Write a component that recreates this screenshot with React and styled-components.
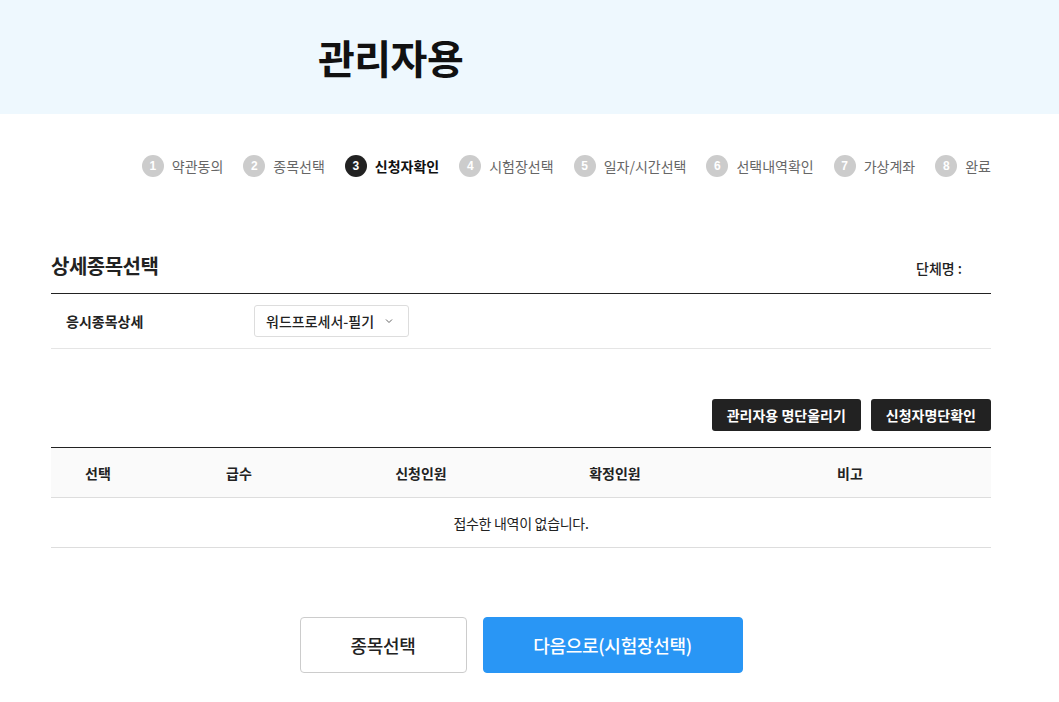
import styled, { createGlobalStyle } from 'styled-components';

const GlobalStyle = createGlobalStyle`
  html, body {
    margin: 0;
    padding: 0;
    background: #fff;
    font-family: 'Noto Sans CJK KR', 'Noto Sans', sans-serif;
    color: #222;
  }
  * { box-sizing: border-box; }
`;

const steps = [
  '약관동의',
  '종목선택',
  '신청자확인',
  '시험장선택',
  '일자/시간선택',
  '선택내역확인',
  '가상계좌',
  '완료',
];

const columns = [
  { label: '선택', width: 94 },
  { label: '급수', width: 188 },
  { label: '신청인원', width: 176 },
  { label: '확정인원', width: 212 },
  { label: '비고', width: 270, shift: 12 },
];

export default function App() {
  return (
    <>
      <GlobalStyle />
      <Header>
        <HeaderInner>
          <PageTitle>관리자용</PageTitle>
        </HeaderInner>
      </Header>

      <Container>
        <StepList>
          {steps.map((label, i) => (
            <Step key={label} active={i === 2}>
              <StepNum active={i === 2}>{i + 1}</StepNum>
              <span>{label}</span>
            </Step>
          ))}
        </StepList>

        <SectionHead>
          <SectionTitle>상세종목선택</SectionTitle>
          <GroupName>단체명 :</GroupName>
        </SectionHead>

        <FormRow>
          <FormLabel>응시종목상세</FormLabel>
          <SelectBox>
            <span>워드프로세서-필기</span>
            <svg width="10" height="10" viewBox="0 0 10 10">
              <path d="M2 3.5 L5 6.5 L8 3.5" fill="none" stroke="#666" strokeWidth="1" />
            </svg>
          </SelectBox>
        </FormRow>

        <ActionBar>
          <DarkButton>관리자용 명단올리기</DarkButton>
          <DarkButton>신청자명단확인</DarkButton>
        </ActionBar>

        <Table>
          <colgroup>
            {columns.map((c) => (
              <col key={c.label} style={{ width: c.width }} />
            ))}
          </colgroup>
          <thead>
            <tr>
              {columns.map((c) => (
                <Th key={c.label} shift={c.shift}>{c.label}</Th>
              ))}
            </tr>
          </thead>
          <tbody>
            <tr>
              <EmptyCell colSpan={5}>접수한 내역이 없습니다.</EmptyCell>
            </tr>
          </tbody>
        </Table>

        <BottomBar>
          <BigButton>종목선택</BigButton>
          <BigButton primary>다음으로(시험장선택)</BigButton>
        </BottomBar>
      </Container>
    </>
  );
}

const Header = styled.header`
  background: #eef8fe;
  height: 114px;
`;

const HeaderInner = styled.div`
  width: 940px;
  margin-left: 51px;
  padding-left: 267px;
  padding-top: 28px;
`;

const PageTitle = styled.h1`
  margin: 0;
  font-size: 40px;
  font-weight: 700;
  line-height: 58px;
  color: #111;
  letter-spacing: -0.5px;
`;

const Container = styled.main`
  width: 940px;
  margin-left: 51px;
`;

const StepList = styled.ol`
  list-style: none;
  margin: 0;
  padding: 40px 0 0;
  display: flex;
  justify-content: flex-end;
  gap: 20px;
`;

const Step = styled.li`
  display: flex;
  align-items: center;
  gap: 8px;
  font-size: 14px;
  line-height: 24px;
  color: ${(p) => (p.active ? '#111' : '#666')};
  font-weight: ${(p) => (p.active ? 700 : 400)};
`;

const StepNum = styled.span`
  width: 22px;
  height: 22px;
  border-radius: 50%;
  background: ${(p) => (p.active ? '#222' : '#ccc')};
  color: #fff;
  font-size: 12px;
  font-weight: 700;
  display: flex;
  align-items: center;
  justify-content: center;
  font-family: 'Liberation Sans', sans-serif;
`;

const SectionHead = styled.div`
  margin-top: 72px;
  display: flex;
  justify-content: space-between;
  align-items: center;
  padding-bottom: 11px;
  border-bottom: 1px solid #222;
`;

const SectionTitle = styled.h2`
  margin: 0;
  font-size: 20px;
  font-weight: 700;
  line-height: 32px;
  letter-spacing: -0.5px;
`;

const GroupName = styled.span`
  font-size: 14px;
  font-weight: 500;
  padding-right: 29px;
  margin-top: 4px;
`;

const FormRow = styled.div`
  display: flex;
  align-items: center;
  height: 55px;
  border-bottom: 1px solid #e5e5e5;
`;

const FormLabel = styled.div`
  width: 203px;
  padding-left: 15px;
  font-size: 14px;
  font-weight: 700;
`;

const SelectBox = styled.div`
  width: 155px;
  height: 32px;
  border: 1px solid #ddd;
  border-radius: 3px;
  display: flex;
  align-items: center;
  justify-content: space-between;
  padding: 0 14px 0 11px;
  font-size: 14px;
  font-weight: 500;
`;

const ActionBar = styled.div`
  display: flex;
  justify-content: flex-end;
  gap: 10px;
  margin-top: 50px;
  margin-bottom: 16px;
`;

const DarkButton = styled.button`
  height: 32px;
  padding: 0 15px;
  border: none;
  border-radius: 3px;
  background: #222;
  color: #fff;
  font-family: inherit;
  font-size: 14px;
  font-weight: 700;
`;

const Table = styled.table`
  width: 100%;
  border-collapse: collapse;
  table-layout: fixed;
  border-top: 1px solid #222;
`;

const Th = styled.th`
  height: 50px;
  padding: 0 ${(p) => p.shift || 0}px 0 0;
  background: #fafafa;
  border-bottom: 1px solid #ddd;
  font-size: 14px;
  font-weight: 700;
  color: #222;
`;

const EmptyCell = styled.td`
  height: 50px;
  text-align: center;
  font-size: 14px;
  border-bottom: 1px solid #ddd;
  letter-spacing: -0.3px;
`;

const BottomBar = styled.div`
  display: flex;
  justify-content: center;
  gap: 16px;
  margin-top: 69px;
`;

const BigButton = styled.button`
  height: 56px;
  width: ${(p) => (p.primary ? '260px' : '167px')};
  border-radius: 4px;
  border: 1px solid ${(p) => (p.primary ? '#2996f5' : '#ccc')};
  background: ${(p) => (p.primary ? '#2996f5' : '#fff')};
  color: ${(p) => (p.primary ? '#fff' : '#222')};
  font-family: inherit;
  font-size: 18px;
  font-weight: 500;
  letter-spacing: -0.3px;
`;
